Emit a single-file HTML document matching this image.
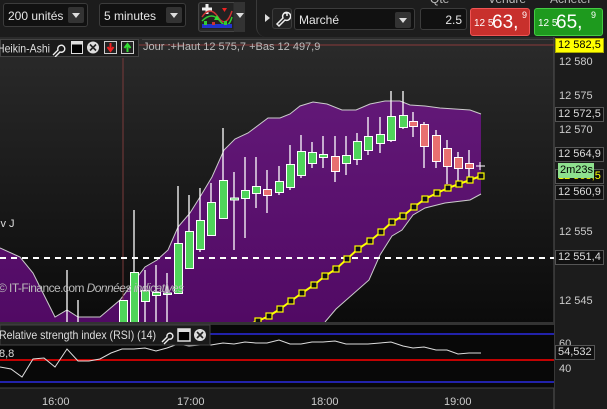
<!DOCTYPE html>
<html><head><meta charset="utf-8"><style>
*{margin:0;padding:0;box-sizing:border-box}
body{width:607px;height:409px;overflow:hidden;background:#1a1a1a;font-family:"Liberation Sans",sans-serif;position:relative;color:#ddd}
.abs{position:absolute}
.box{position:absolute;background:#111;border:1px solid #3c3c3c;border-radius:3px;color:#e6e6e6;font-size:12px}
.dd{position:absolute;width:16px;height:16px;background:#333;border-radius:2px;top:3px;right:3px}
.dd:after{content:"";position:absolute;left:4px;top:6px;border-left:4px solid transparent;border-right:4px solid transparent;border-top:5px solid #ddd}
.lbl{position:absolute;left:559px;font-size:11px;color:#ccc}
.tag{position:absolute;left:555px;height:15px;border:1px solid #555;background:#111;color:#ddd;font-size:11px;padding:0 2px;line-height:13px}
</style></head><body>
<div class="abs" style="left:0;top:0;width:607px;height:37px;background:#1c1c1c"></div>
<div class="box" style="left:3px;top:3px;width:85px;height:24px;padding:5px 0 0 4px">200 unités<div class="dd"></div></div>
<div class="box" style="left:99px;top:3px;width:87px;height:24px;padding:5px 0 0 4px">5 minutes<div class="dd"></div></div>
<div class="abs" style="left:198px;top:2px;width:46px;height:30px;background:#2b2b2b;border:1px solid #444;border-radius:3px"></div>
<svg class="abs" style="left:200px;top:3px" width="33" height="26"><rect x="0" y="0" width="33" height="26" fill="#222"/><path d="M2 6h10M7 1v10" stroke="#eee" stroke-width="3"/><path d="M2 14 Q10 2 18 14 T32 8" stroke="#c33" fill="none" stroke-width="1.5"/><path d="M2 18 Q12 8 20 18 T32 14" stroke="#3c3" fill="none" stroke-width="1.5"/><path d="M22 5h5l-2.5 4z" fill="#e22"/><path d="M14 17l3-5 3 5z" fill="#3d3"/><rect x="2" y="21" width="30" height="4" fill="#23c"/><rect x="4" y="18" width="3" height="4" fill="#3c3"/><rect x="12" y="19" width="3" height="3" fill="#c33"/><rect x="24" y="18" width="3" height="4" fill="#3c3"/></svg>
<div class="abs" style="left:234px;top:2px;width:11px;height:30px;background:#333"></div>
<div class="abs" style="left:236px;top:13px;border-left:4px solid transparent;border-right:4px solid transparent;border-top:5px solid #ddd"></div>
<div class="abs" style="left:256px;top:0;width:351px;height:37px;border-left:1px solid #3a3a3a;border-bottom-left-radius:10px;background:#1d1d1d"></div>
<div class="abs" style="left:265px;top:14px;border-top:4px solid transparent;border-bottom:4px solid transparent;border-left:5px solid #ddd"></div>
<div class="box" style="left:272px;top:8px;width:20px;height:21px;background:#222"><svg width="18" height="19"><path d="M4 15l6-6a4 4 0 1 1 2 2l-6 6z M11 4l3 0 0 3" stroke="#eee" fill="none" stroke-width="1.5"/></svg></div>
<div class="box" style="left:294px;top:8px;width:121px;height:22px;padding:4px 0 0 4px">Marché<div class="dd"></div></div>
<div class="abs" style="left:430px;top:-8px;font-size:12px;color:#bbb">Qté</div>
<div class="box" style="left:420px;top:8px;width:47px;height:22px;text-align:right;padding:4px 4px 0 0">2.5</div>
<div class="abs" style="left:488px;top:-8px;font-size:12px;color:#bbb">Vendre</div>
<div class="abs" style="left:550px;top:-8px;font-size:12px;color:#bbb">Acheter</div>
<div class="abs" style="left:470px;top:8px;width:60px;height:28px;background:#c8302c;border:1px solid #e55;border-radius:3px;color:#fff"><span class="abs" style="left:3px;top:9px;font-size:10px">12 5</span><span class="abs" style="left:21px;top:3px;font-size:19px">63,</span><span class="abs" style="left:51px;top:1px;font-size:9px">9</span></div>
<div class="abs" style="left:534px;top:8px;width:69px;height:28px;background:#1e9a1e;border:1px solid #4c4;border-radius:3px;color:#fff"><span class="abs" style="left:3px;top:9px;font-size:10px">12 5</span><span class="abs" style="left:21px;top:3px;font-size:19px">65,</span><span class="abs" style="left:56px;top:1px;font-size:9px">9</span></div>

<svg class="abs" style="left:0;top:37px" width="607" height="372">
<defs><linearGradient id="g" x1="0" y1="0" x2="0" y2="1"><stop offset="0" stop-color="#2b2b2b"/><stop offset="1" stop-color="#0b0b0b"/></linearGradient>
<linearGradient id="p" x1="0" y1="0" x2="0" y2="1"><stop offset="0" stop-color="#621877"/><stop offset="1" stop-color="#510a64"/></linearGradient></defs>
<rect x="0" y="0" width="554" height="286" fill="url(#g)"/>
<rect x="554" y="0" width="53" height="372" fill="#1c1c1c"/>
<line x1="554" y1="0" x2="554" y2="372" stroke="#555"/>
<g transform="translate(0,-37)">
<path d="M0 248 L20 257 L33 273 L55 317 L67 310 L78 317 L100 317 L120 300 L145 267 L157 260 L168 250 L178 227 L190 213 L200 197 L212 177 L224 150 L235 139 L248 133 L268 118 L280 118 L290 114 L300 106 L313 102 L327 104 L342 110 L356 110 L370 104 L385 101 L400 101 L410 105 L425 106 L440 108 L470 110 L481 114 L481 194 L470 200 L445 203 L425 208 L413 215 L402 230 L392 236 L380 255 L369 280 L336 309 L325 322 L0 322Z" fill="url(#p)"/>
<path d="M0 248 L20 257 L33 273 L55 317 L67 310 L78 317 L100 317 L120 300 L145 267 L157 260 L168 250 L178 227 L190 213 L200 197 L212 177 L224 150 L235 139 L248 133 L268 118 L280 118 L290 114 L300 106 L313 102 L327 104 L342 110 L356 110 L370 104 L385 101 L400 101 L410 105 L425 106 L440 108 L470 110 L481 114" fill="none" stroke="#ccc" stroke-width="1"/>
<path d="M481 194 L470 200 L445 203 L425 208 L413 215 L402 230 L392 236 L380 255 L369 280 L336 309 L325 322" fill="none" stroke="#ccc"/>
<line x1="0" y1="45" x2="554" y2="45" stroke="#8a3a3a"/>
<line x1="123" y1="58" x2="123" y2="386" stroke="#7a3a3a"/>
<line x1="0" y1="258" x2="554" y2="258" stroke="#fff" stroke-width="2" stroke-dasharray="6,5"/>
<g stroke="#fff" stroke-width="1.3">
<line x1="134" y1="210" x2="134" y2="322"/><line x1="145" y1="270" x2="145" y2="322"/><line x1="156" y1="265" x2="156" y2="322"/><line x1="167" y1="273" x2="167" y2="322"/><line x1="178" y1="186" x2="178" y2="293"/><line x1="189" y1="195" x2="189" y2="268"/><line x1="200" y1="188" x2="200" y2="252"/><line x1="211" y1="183" x2="211" y2="235"/><line x1="223" y1="128" x2="223" y2="218"/><line x1="234" y1="172" x2="234" y2="250"/><line x1="245" y1="157" x2="245" y2="238"/><line x1="256" y1="157" x2="256" y2="208"/><line x1="267" y1="170" x2="267" y2="213"/><line x1="279" y1="166" x2="279" y2="195"/><line x1="290" y1="145" x2="290" y2="190"/><line x1="301" y1="135" x2="301" y2="178"/><line x1="312" y1="142" x2="312" y2="168"/><line x1="323" y1="136" x2="323" y2="168"/><line x1="335" y1="136" x2="335" y2="182"/><line x1="346" y1="136" x2="346" y2="175"/><line x1="357" y1="133" x2="357" y2="165"/><line x1="368" y1="117" x2="368" y2="155"/><line x1="380" y1="117" x2="380" y2="153"/><line x1="391" y1="91" x2="391" y2="142"/><line x1="403" y1="91" x2="403" y2="129"/><line x1="413" y1="112" x2="413" y2="137"/><line x1="424" y1="122" x2="424" y2="168"/><line x1="436" y1="130" x2="436" y2="168"/><line x1="447" y1="140" x2="447" y2="184"/><line x1="458" y1="152" x2="458" y2="187"/><line x1="469" y1="150" x2="469" y2="177"/>
<line x1="67" y1="270" x2="67" y2="322"/><line x1="78" y1="300" x2="78" y2="322"/>
</g>
<g stroke="#fff" stroke-width="1" fill="#4fd45a">
<rect x="119.5" y="300.5" width="8" height="22"/><rect x="130.5" y="272.5" width="8" height="50"/><rect x="141.5" y="290.5" width="8" height="11"/><rect x="152.5" y="292.5" width="8" height="3"/><rect x="163.5" y="293" width="8" height="1.5"/><rect x="174.5" y="243.5" width="8" height="50"/><rect x="185.5" y="231.5" width="8" height="37"/><rect x="196.5" y="220.5" width="8" height="29"/><rect x="207.5" y="202.5" width="8" height="33"/><rect x="219.5" y="180.5" width="8" height="38"/><rect x="230.5" y="198" width="8" height="2"/><rect x="241.5" y="190.5" width="8" height="8"/><rect x="252.5" y="186.5" width="8" height="7"/>
<rect x="263.5" y="189.5" width="8" height="6" fill="#e87070"/>
<rect x="275.5" y="181.5" width="8" height="11"/><rect x="286.5" y="164.5" width="8" height="23"/><rect x="297.5" y="151.5" width="8" height="24"/><rect x="308.5" y="152.5" width="8" height="11"/><rect x="319.5" y="154.5" width="8" height="3"/>
<rect x="331.5" y="156.5" width="8" height="15" fill="#e87070"/>
<rect x="342.5" y="155.5" width="8" height="8"/><rect x="353.5" y="141.5" width="8" height="18"/><rect x="364.5" y="136.5" width="8" height="14"/><rect x="376.5" y="134.5" width="8" height="9"/><rect x="387.5" y="116.5" width="8" height="24"/><rect x="399.5" y="115.5" width="8" height="12"/>
<g fill="#e87070"><rect x="409.5" y="121.5" width="8" height="5"/><rect x="420.5" y="124.5" width="8" height="22"/><rect x="432.5" y="135.5" width="8" height="26"/><rect x="443.5" y="148.5" width="8" height="18"/><rect x="454.5" y="157.5" width="8" height="11"/><rect x="465.5" y="163.5" width="8" height="5"/></g>
</g>
<path d="M476 166h9M480 162v8" stroke="#fff"/>
<polyline points="250,324 258,321 269,316 280,309 291,301 302,293 314,285 325,276 336,269 347,259 358,249 370,241 381,232 392,222 403,216 414,207 425,199 437,193 448,188 459,184 470,180 481,176" fill="none" stroke="#ff0" stroke-width="2"/>
<g fill="#111" stroke="#ff0" stroke-width="1.2">
<rect x="255" y="318" width="6" height="6"/><rect x="266" y="313" width="6" height="6"/><rect x="277" y="306" width="6" height="6"/><rect x="288" y="298" width="6" height="6"/><rect x="299" y="290" width="6" height="6"/><rect x="311" y="282" width="6" height="6"/><rect x="322" y="273" width="6" height="6"/><rect x="333" y="266" width="6" height="6"/><rect x="344" y="256" width="6" height="6"/><rect x="355" y="246" width="6" height="6"/><rect x="367" y="238" width="6" height="6"/><rect x="378" y="229" width="6" height="6"/><rect x="389" y="219" width="6" height="6"/><rect x="400" y="213" width="6" height="6"/><rect x="411" y="204" width="6" height="6"/><rect x="422" y="196" width="6" height="6"/><rect x="434" y="190" width="6" height="6"/><rect x="445" y="185" width="6" height="6"/><rect x="456" y="181" width="6" height="6"/><rect x="467" y="177" width="6" height="6"/><rect x="478" y="173" width="6" height="6"/></g>
<text x="-2" y="292" font-size="12" fill="#bbb" font-family="Liberation Sans" textLength="186">© IT-Finance.com  <tspan font-style="italic">Données indicatives</tspan></text>
<text x="-2" y="227" font-size="11" fill="#ddd" font-family="Liberation Sans">iv J</text>
<rect x="0" y="322" width="554" height="3" fill="#333"/>
<rect x="0" y="325" width="554" height="63" fill="#080808"/>
<line x1="0" y1="334" x2="554" y2="334" stroke="#2a2ae0" stroke-width="1.5"/>
<line x1="0" y1="360" x2="554" y2="360" stroke="#f00" stroke-width="1.5"/>
<line x1="0" y1="382" x2="554" y2="382" stroke="#2a2ae0" stroke-width="1.5"/>
<polyline points="0,367 11,369 22,377 33,359 44,358 55,367 67,349 78,361 89,361 100,359 111,353 122,349 134,349 145,348 156,351 167,348 178,344 189,346 200,345 211,345 223,343 234,344 245,342 256,343 267,343 279,340 290,344 301,344 312,342 323,342 335,341 346,344 357,344 368,344 380,343 391,342 403,346 413,348 424,347 436,350 447,350 458,354 469,353 481,353" fill="none" stroke="#ddd" stroke-width="1"/>
<rect x="0" y="325" width="210" height="20" fill="#1a1a1a" stroke="#444"/>
<text x="-1" y="339" font-size="12" fill="#ddd" font-family="Liberation Sans" textLength="157" lengthAdjust="spacingAndGlyphs">Relative strength index (RSI) (14)</text>
<path d="M162 342l5-5a3 3 0 1 1 2 2l-5 5" stroke="#eee" fill="none" stroke-width="1.4"/>
<rect x="178" y="329" width="12" height="12" fill="#000" stroke="#ddd" stroke-width="1.5"/><rect x="178" y="329" width="12" height="3" fill="#ddd"/>
<circle cx="200" cy="335" r="6" fill="#ddd"/><path d="M197 332l6 6M203 332l-6 6" stroke="#222" stroke-width="1.6"/>
<text x="-1" y="357" font-size="11" fill="#ddd" font-family="Liberation Sans">8,8</text>
<line x1="0" y1="388" x2="554" y2="388" stroke="#444"/>
</g>
</svg>
<div class="abs" style="left:0;top:39px;width:139px;height:18px;background:#1a1a1a;border:1px solid #444"></div>
<svg class="abs" style="left:0;top:39px" width="140" height="18"><text x="-3" y="13.5" font-size="12" fill="#ddd" font-family="Liberation Sans" textLength="53" lengthAdjust="spacingAndGlyphs">Heikin-Ashi</text>
<path d="M53 16l5-5a3.5 3.5 0 1 1 2 2l-5 5" stroke="#eee" fill="none" stroke-width="1.4"/><rect x="71.5" y="2.5" width="11" height="12" fill="#000" stroke="#ddd"/><rect x="71.5" y="2.5" width="11" height="3" fill="#ddd"/><circle cx="93" cy="8.5" r="6" fill="#ddd"/><path d="M90 5.5l6 6M96 5.5l-6 6" stroke="#222" stroke-width="1.6"/><rect x="104.5" y="2.5" width="12" height="12" fill="#222" stroke="#ccc"/><path d="M110.5 4v7M107.5 8l3 4 3-4" stroke="#e22" stroke-width="2" fill="none"/><rect x="121.5" y="2.5" width="12" height="12" fill="#222" stroke="#ccc"/><path d="M127.5 13v-7M124.5 9l3-4 3 4" stroke="#3d3" stroke-width="2" fill="none"/></svg>
<div class="abs" style="left:143px;top:41px;font-size:11px;color:#bbb">Jour :+Haut 12 575,7 +Bas 12 497,9</div>
<div class="abs" style="left:142px;top:39px;width:412px;height:1px;background:#444"></div>

<div class="tag" style="top:38px;background:#ff0;color:#000;border-color:#aa0">12 582,5</div>
<div class="lbl" style="top:56px">12 580</div>
<div class="lbl" style="top:90px">12 575</div>
<div class="tag" style="top:107px">12 572,5</div>
<div class="lbl" style="top:124px">12 570</div>
<div class="tag" style="top:147px">12 564,9</div>
<div class="tag" style="top:169px;color:#ff0">12 563,5</div>
<div class="abs" style="left:558px;top:163px;width:36px;height:15px;background:#8ee08e;color:#000;font-size:11px;padding-left:2px;line-height:14px">2m23s</div>
<div class="tag" style="top:185px">12 560,9</div>
<div class="lbl" style="top:226px">12 555</div>
<div class="tag" style="top:250px">12 551,4</div>
<div class="lbl" style="top:295px">12 545</div>
<div class="lbl" style="top:338px">60</div>
<div class="tag" style="top:345px">54,532</div>
<div class="lbl" style="top:363px">40</div>
<div class="abs" style="left:42px;top:396px;font-size:11px;color:#ccc">16:00</div>
<div class="abs" style="left:177px;top:396px;font-size:11px;color:#ccc">17:00</div>
<div class="abs" style="left:311px;top:396px;font-size:11px;color:#ccc">18:00</div>
<div class="abs" style="left:444px;top:396px;font-size:11px;color:#ccc">19:00</div>
</body></html>
